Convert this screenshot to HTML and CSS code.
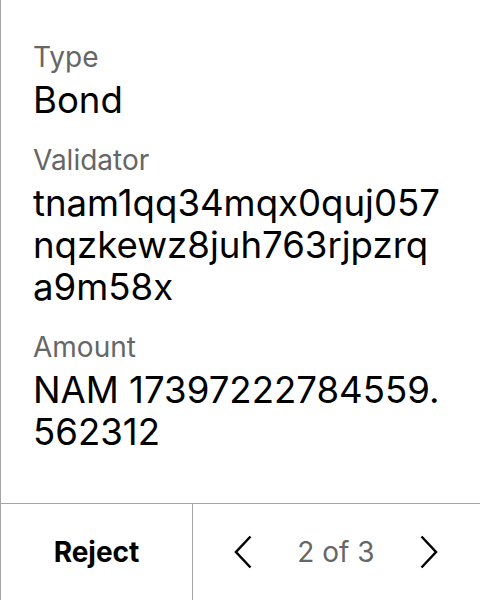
FILE: index.html
```html
<!DOCTYPE html>
<html>
<head>
<meta charset="utf-8">
<link rel="stylesheet" href="styles.css">
</head>
<body>
<div class="screen">
  <div class="content">
    <div class="field">
      <div class="label">Type</div>
      <div class="value">Bond</div>
    </div>
    <div class="field">
      <div class="label">Validator</div>
      <div class="value">tnam1qq34mqx0quj057nqzkewz8juh763rjpzrqa9m58x</div>
    </div>
    <div class="field">
      <div class="label">Amount</div>
      <div class="value">NAM 17397222784559.562312</div>
    </div>
  </div>
  <div class="footer">
    <div class="reject">Reject</div>
    <div class="pager">
      <svg class="chev" width="18" height="34" viewBox="0 0 18 34"><path d="M16.5 1.5 L2 17 L16.5 32.5" fill="none" stroke="#000" stroke-width="2.5"/></svg>
      <span class="count">2 of 3</span>
      <svg class="chev" width="18" height="34" viewBox="0 0 18 34"><path d="M1.5 1.5 L16 17 L1.5 32.5" fill="none" stroke="#000" stroke-width="2.5"/></svg>
    </div>
  </div>
</div>
</body>
</html>
```
FILE: styles.css
```css
html, body {
  margin: 0;
  padding: 0;
  background: #fff;
}
.screen {
  width: 480px;
  height: 600px;
  box-sizing: border-box;
  border-left: 1px solid #a6a6a6;
  display: flex;
  flex-direction: column;
  font-family: Inter, "Noto Sans", sans-serif;
  color: #000;
}
.content {
  flex: 1;
  padding: 40px 34px 0 32px;
  display: flex;
  flex-direction: column;
  gap: 22px;
}
.label {
  font-size: 28px;
  line-height: 34px;
  color: #666;
  margin-bottom: 5px;
}
.value {
  font-size: 36.6px;
  line-height: 42px;
  word-break: break-all;
}
.footer {
  height: 96px;
  border-top: 1px solid #a6a6a6;
  display: flex;
}
.reject {
  width: 191px;
  border-right: 1px solid #a6a6a6;
  display: flex;
  align-items: center;
  justify-content: center;
  font-size: 28px;
  font-weight: 700;
}
.pager {
  flex: 1;
  display: flex;
  align-items: center;
  justify-content: space-between;
  padding: 0 42px 0 41px;
}
.count {
  font-size: 28px;
  color: #666;
}
```
